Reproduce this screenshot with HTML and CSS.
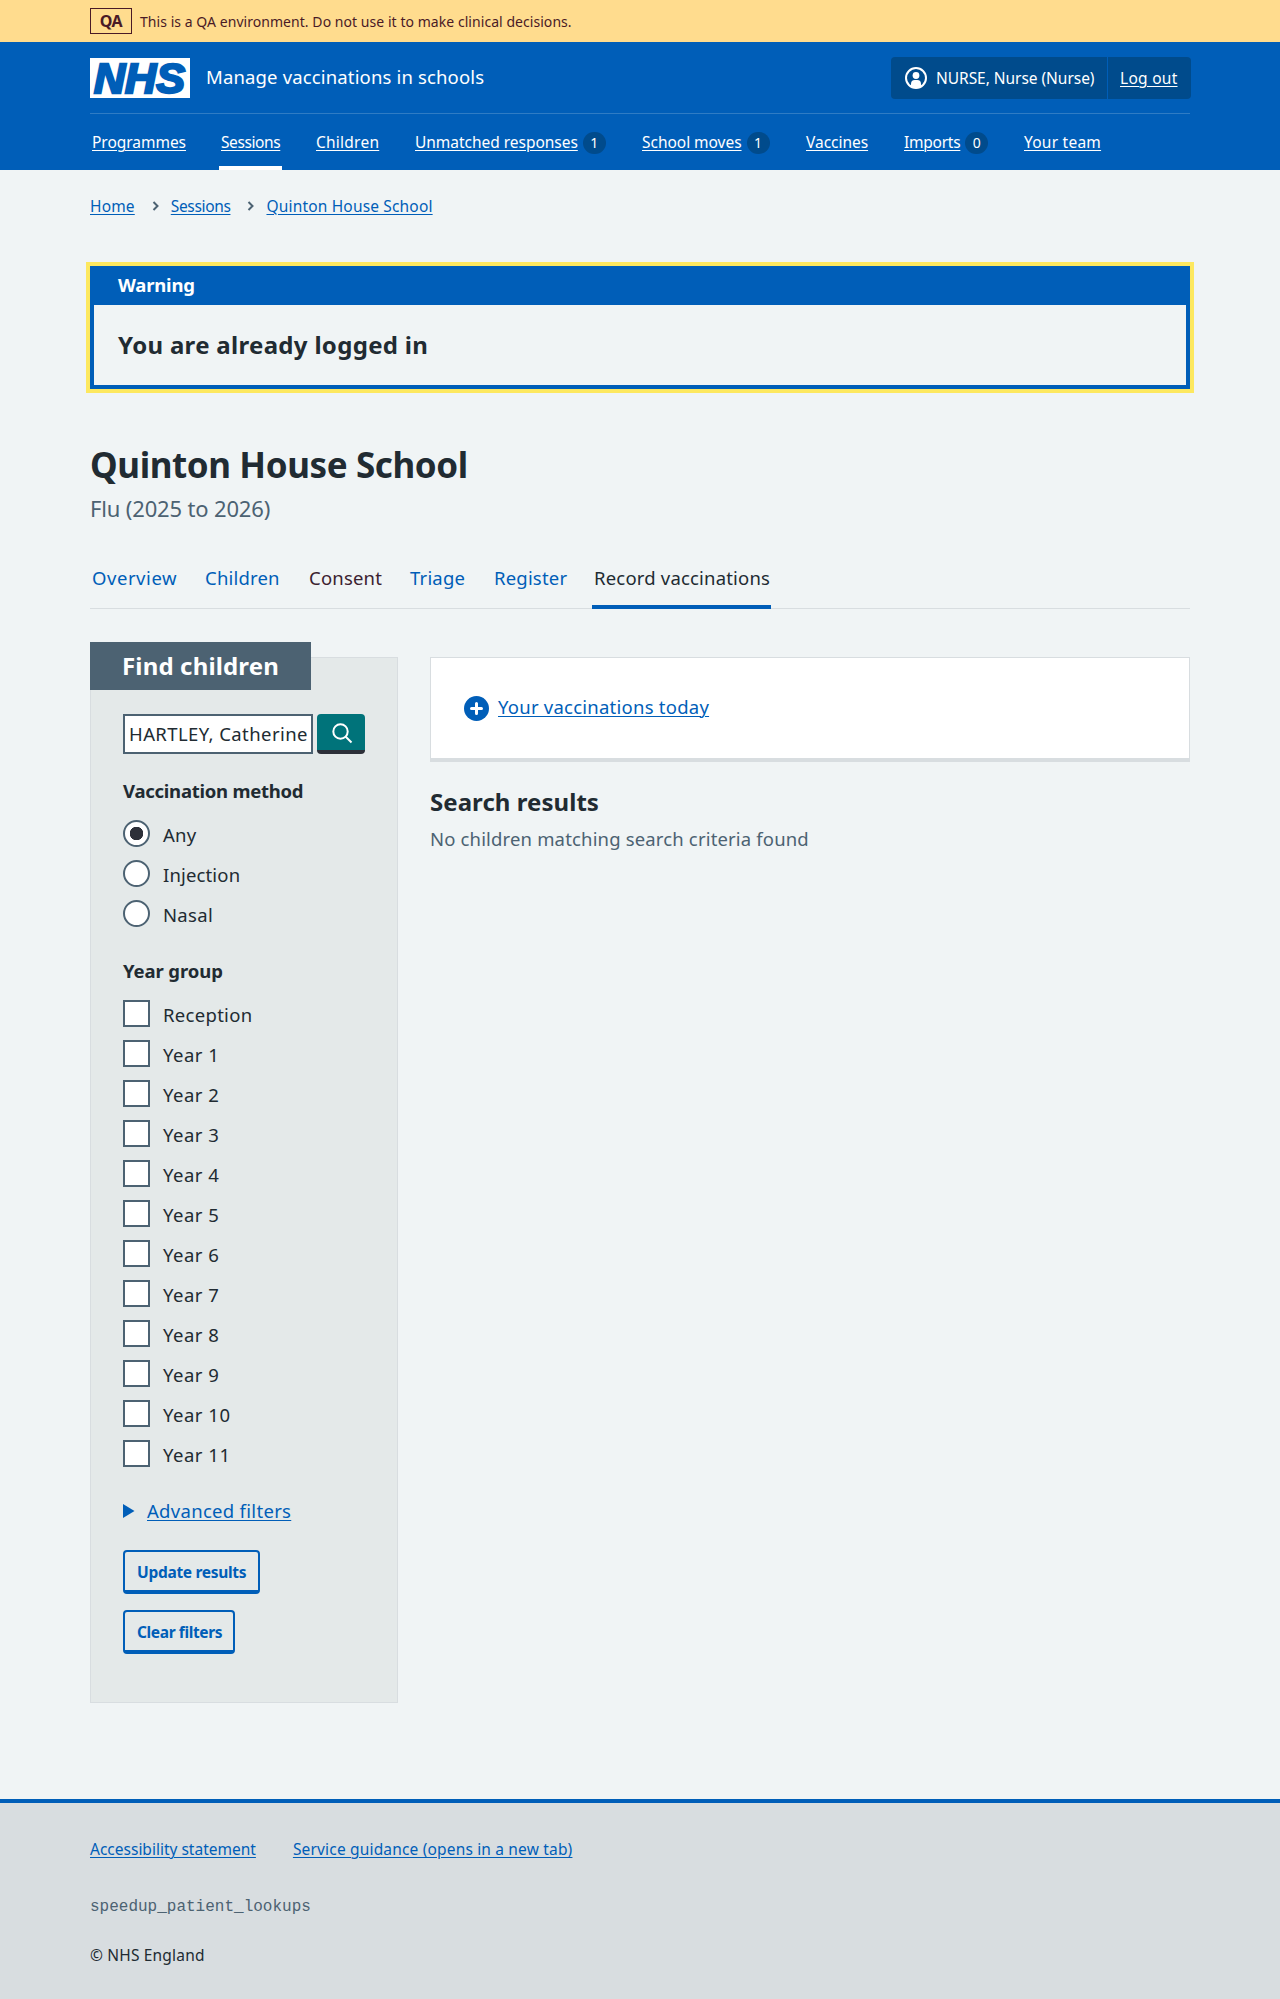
FILE: index.html
```html
<!DOCTYPE html>
<html lang="en">
<head>
<meta charset="utf-8">
<title>Quinton House School – Manage vaccinations in schools</title>
<link rel="stylesheet" href="styles.css">
</head>
<body>
<div class="env"><div class="container env-row"><strong class="env-tag">QA</strong><span class="env-text">This is a QA environment. Do not use it to make clinical decisions.</span></div></div>

<header class="header">
  <div class="container">
    <div class="header-top">
      <svg class="logo" viewBox="0 0 100 40" width="100" height="40" role="img" aria-label="NHS">
        <rect width="100" height="40" fill="#fff"/>
        <text x="4" y="35.300" textLength="91" lengthAdjust="spacingAndGlyphs" class="logo-text">NHS</text>
      </svg>
      <span class="service">Manage vaccinations in schools</span>
      <div class="account">
        <span class="account-user">
          <svg width="22" height="22" viewBox="0 0 22 22" aria-hidden="true"><circle cx="11" cy="11" r="10" fill="none" stroke="#fff" stroke-width="2"/><circle cx="11" cy="8.500" r="3.400" fill="#fff"/><path d="M6 19.600v-2.800a3.800 3.800 0 0 1 3.800-3.800h2.400a3.800 3.800 0 0 1 3.800 3.800v2.800a10 10 0 0 1-10 0z" fill="#fff"/></svg>
          NURSE, Nurse (Nurse)
        </span>
        <a href="#" class="account-out">Log out</a>
      </div>
    </div>
    <nav class="nav">
      <span><a href="#">Programmes</a></span>
      <span class="nav-current"><a href="#">Sessions</a></span>
      <span class="wide"><a href="#">Children</a></span>
      <span><a href="#">Unmatched responses</a><b class="count">1</b></span>
      <span><a href="#">School moves</a><b class="count">1</b></span>
      <span><a href="#">Vaccines</a></span>
      <span class="tight"><a href="#">Imports</a><b class="count">0</b></span>
      <span class="wide"><a href="#">Your team</a></span>
    </nav>
  </div>
</header>

<main class="container">
  <nav class="crumbs">
    <a href="#">Home</a>
    <svg width="7" height="10" viewBox="0 0 7 10"><path d="M1.500 1l4 4-4 4" /></svg>
    <a href="#" class="tight">Sessions</a>
    <svg width="7" height="10" viewBox="0 0 7 10"><path d="M1.500 1l4 4-4 4" /></svg>
    <a href="#">Quinton House School</a>
  </nav>

  <section class="banner">
    <h2 class="banner-title">Warning</h2>
    <p class="banner-body">You are already logged in</p>
  </section>

  <h1 class="title">Quinton House School</h1>
  <p class="caption">Flu (2025 to 2026)</p>

  <nav class="tabs">
    <a href="#" class="tab-first">Overview</a><a href="#">Children</a><a href="#" class="tab-active">Consent</a><a href="#">Triage</a><a href="#">Register</a><a href="#" class="tab-current">Record vaccinations</a>
  </nav>

  <div class="columns">
    <form class="panel">
      <h2 class="panel-title">Find children</h2>
      <div class="panel-body">
        <div class="search">
          <input class="search-input" type="text" value="HARTLEY, Catherine" aria-label="Name">
          <button class="search-button" type="button" aria-label="Search"><svg width="22" height="22" viewBox="0 0 22 22"><circle cx="9.500" cy="9.500" r="7.200" /><path d="M14.500 14.500l6 6" /></svg></button>
        </div>
        <h3 class="legend">Vaccination method</h3>
        <label class="option"><i class="radio checked"></i>Any</label>
        <label class="option option-snug"><i class="radio"></i>Injection</label>
        <label class="option"><i class="radio"></i>Nasal</label>
        <h3 class="legend legend-next">Year group</h3>
        <label class="option"><i class="box"></i>Reception</label>
        <label class="option year"><i class="box"></i>Year 1</label>
        <label class="option year"><i class="box"></i>Year 2</label>
        <label class="option year"><i class="box"></i>Year 3</label>
        <label class="option year"><i class="box"></i>Year 4</label>
        <label class="option year"><i class="box"></i>Year 5</label>
        <label class="option year"><i class="box"></i>Year 6</label>
        <label class="option year"><i class="box"></i>Year 7</label>
        <label class="option year"><i class="box"></i>Year 8</label>
        <label class="option year"><i class="box"></i>Year 9</label>
        <label class="option year"><i class="box"></i>Year 10</label>
        <label class="option year"><i class="box"></i>Year 11</label>
        <div class="advanced"><svg width="12" height="14" viewBox="0 0 12 14"><path d="M0 0l11.500 7-11.500 7z" fill="#005eb8"/></svg><a href="#">Advanced filters</a></div>
        <button type="button" class="button button-update">Update results</button>
        <button type="button" class="button button-clear">Clear filters</button>
      </div>
    </form>
    <div>
      <div class="card"><svg width="25" height="25" viewBox="0 0 25 25"><circle cx="12.500" cy="12.500" r="12.500" fill="#005eb8"/><path d="M12.500 7.500v10M7.500 12.500h10" stroke="#fff" stroke-width="3" stroke-linecap="round"/></svg><a href="#">Your vaccinations today</a></div>
      <h2 class="results">Search results</h2>
      <p class="none">No children matching search criteria found</p>
    </div>
  </div>
</main>

<footer class="footer">
  <div class="container">
    <div class="footer-links"><a href="#">Accessibility statement</a><a href="#" class="guidance">Service guidance (opens in a new tab)</a></div>
    <p class="branch">speedup_patient_lookups</p>
    <p class="copyright">© NHS England</p>
  </div>
</footer>
</body>
</html>
```
FILE: styles.css
```css
* { box-sizing: border-box; }
body { margin: 0; background: #f0f4f5; color: #212b32; font: 400 18.5px/28px "Noto Sans", sans-serif; }
h1, h2, h3, p { margin: 0; font-weight: 700; }
p { font-weight: 400; }
a { color: #005eb8; text-decoration-thickness: 1px; text-underline-offset: 2px; }
svg { display: block; flex: none; }
.container { width: 1100px; margin: 0 auto; }

.env { background: #ffdc8e; color: #4a1a26; }
.env-row { display: flex; align-items: center; gap: 8px; height: 42px; }
.env-tag { width: 42px; height: 26px; border: 1px solid; font-size: 16px; line-height: 25px; text-align: center; font-weight: 700; letter-spacing: -.4px; }
.env-text { padding-top: 2px; font-size: 14px; letter-spacing: .05px; }

.header { background: #005eb8; color: #fff; font-size: 15.5px; }
.header a { color: #fff; }
.header-top { display: flex; align-items: center; height: 72px; border-bottom: 1px solid #2f7cc4; }
.logo { overflow: visible; }
.logo-text { font: italic 700 43px/1 "Liberation Sans", sans-serif; fill: #005eb8; stroke: #005eb8; stroke-width: 2.500px; }
.service { margin-left: 16px; padding-bottom: 2px; font-size: 18.5px; letter-spacing: .15px; }
.account { display: flex; align-items: stretch; width: 300px; height: 42px; margin: 0 -1px 0 auto; background: #004b8c; border-radius: 4px; line-height: 42px; white-space: nowrap; }
.account-user { display: flex; align-items: center; gap: 9px; width: 217px; padding-left: 14px; border-right: 1px solid #005eb8; letter-spacing: -.04px; }
.account-out { padding-left: 12px; letter-spacing: .27px; }
.nav { display: grid; grid-template-columns: 129px 95px 99px 227px 164px 98px 120px auto; height: 56px; padding-left: 2px; line-height: 56px; white-space: nowrap; letter-spacing: -.03px; }
.nav-current { width: 63px; margin-left: -2px; padding-left: 2px; box-shadow: inset 0 -4px #fff; letter-spacing: -.4px; }
.wide { letter-spacing: .24px; }
.tight { letter-spacing: -.35px; }
.nav .tight { letter-spacing: -.25px; }
.count { display: inline-block; min-width: 23px; height: 22px; margin-left: 5px; border-radius: 11px; background: #004b8c; font-size: 14px; font-weight: 400; line-height: 22px; text-align: center; letter-spacing: 0; }

.crumbs { display: flex; align-items: center; height: 24px; margin-top: 24px; font-size: 15.5px; line-height: 24px; letter-spacing: .17px; }
.crumbs svg { margin: 0 12px 0 17px; fill: none; stroke: #4c6272; stroke-width: 2px; }
.banner { margin-top: 48px; border: 4px solid #005eb8; outline: 4px solid #fde85f; }
.banner-title { height: 35px; padding-left: 24px; background: #005eb8; color: #fff; font-size: 18.5px; line-height: 30px; letter-spacing: -.2px; }
.banner-body { height: 80px; padding-left: 24px; font-size: 24px; font-weight: 700; line-height: 79px; letter-spacing: .31px; }
.title { margin-top: 50px; font-size: 35px; line-height: 52px; letter-spacing: -.4px; }
.caption { color: #4c6272; font-size: 22px; line-height: 34px; letter-spacing: -.16px; }

.tabs { display: grid; grid-template-columns: 113px 104px 101px 84px 98px 179px; height: 61px; margin-top: 23px; padding-left: 2px; border-bottom: 1px solid #d8dde0; line-height: 60px; letter-spacing: .19px; white-space: nowrap; }
.tabs a { text-decoration: none; }
.tabs .tab-first { letter-spacing: .55px; }
.tabs .tab-active { color: #3b2230; }
.tabs .tab-current { height: 61px; padding-left: 2px; color: #212b32; box-shadow: inset 0 -4px #005eb8; }

.columns { display: grid; grid-template-columns: 308px 760px; gap: 32px; margin-top: 48px; }
.panel { height: 1046px; border: 1px solid #d8dde0; background: #e4e9e9; }
.panel-title { width: 221px; height: 48px; margin: -16px 0 0 -1px; padding-left: 32px; background: #4c6272; color: #fff; font-size: 24px; line-height: 48px; letter-spacing: .15px; }
.panel-body { display: flex; flex-direction: column; align-items: flex-start; padding: 24px 32px 0; letter-spacing: .3px; }
.search { display: flex; gap: 4px; }
.search-input { width: 190px; height: 40px; padding: 0 4px 2px; border: 2px solid #4c6272; border-radius: 0; background: #fff; color: #212b32; font: inherit; letter-spacing: .42px; }
.search-button { display: grid; place-items: center; width: 48px; height: 40px; padding: 2px 0 0 2px; border: 0; border-bottom: 4px solid #2d3039; border-radius: 4px; background: #00737a; }
.search-button svg { fill: none; stroke: #fff; stroke-width: 2px; }
.legend { margin: 23px 0 10px; font-size: 18.5px; line-height: 28px; letter-spacing: -.25px; }
.legend-next { margin-top: 22px; letter-spacing: -.1px; }
.option { display: flex; align-items: center; gap: 13px; height: 40px; }
.option-snug { letter-spacing: .15px; }
.year { letter-spacing: .5px; }
.radio, .box { width: 27px; height: 27px; margin-top: -3px; border: 2px solid #4c6272; background: #fff; }
.radio { border-radius: 50%; }
.checked { background: radial-gradient(circle, #2d3039 6.500px, #fff 7px); }
.advanced { display: flex; align-items: center; gap: 12px; margin-top: 22px; }
.button { height: 44px; padding: 2px 0 0 12px; border: 2px solid #005eb8; border-bottom-width: 4px; border-radius: 4px; background: none; color: #005eb8; font: 700 15.5px/36px "Noto Sans", sans-serif; letter-spacing: -.3px; text-align: left; }
.button-update { width: 137px; margin-top: 25px; }
.button-clear { width: 112px; margin-top: 16px; letter-spacing: -.37px; }

.card { display: flex; align-items: center; gap: 9px; height: 105px; padding: 0 33px; border: 1px solid #d8dde0; border-bottom-width: 4px; background: #fff; letter-spacing: .24px; }
.card a { margin-top: -2px; }
.results { margin-top: 24px; font-size: 24px; line-height: 32px; letter-spacing: .05px; }
.none { margin-top: 7px; color: #4c6272; letter-spacing: .16px; }

.footer { height: 200px; margin-top: 96px; padding-top: 34px; border-top: 4px solid #005eb8; background: #d8dde0; font-size: 15.5px; line-height: 24px; }
.footer-links { display: flex; gap: 37px; }
.guidance { letter-spacing: .17px; }
.branch { margin-top: 34px; color: #4c6272; font: 16px/24px "Liberation Mono", monospace; }
.copyright { margin-top: 24px; letter-spacing: .18px; }
```
